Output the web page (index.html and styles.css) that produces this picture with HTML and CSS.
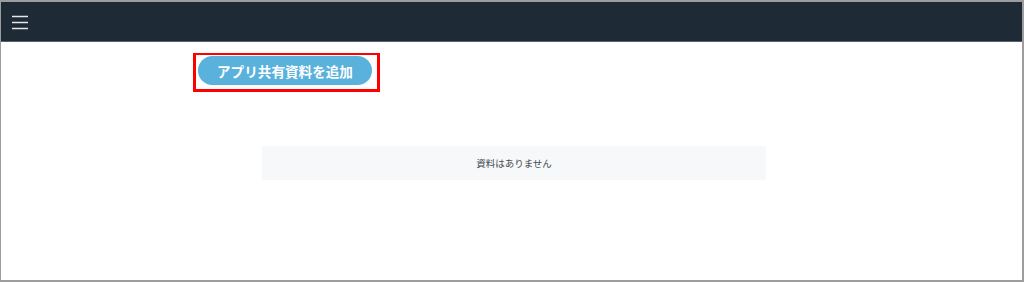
FILE: index.html
```html
<!DOCTYPE html>
<html>
  <head>
    <meta charset="utf-8" />
    <link rel="stylesheet" href="styles.css">
  </head>
  <body>
    <div class="frame">
      <div class="header">
        <svg class="menu-icon" width="16" height="16" viewBox="0 0 16 16">
          <path d="M0 2.5H16M0 8.5H16M0 14.5H16" stroke="#e4e7ea" stroke-width="1.6" />
        </svg>
      </div>

      <div class="content">
        <div class="highlight">
          <button class="add-btn">アプリ共有資料を追加</button>
        </div>

        <div class="empty">資料はありません</div>
      </div>
    </div>
  </body>
</html>
```

FILE: styles.css
```css
:root {
  --frame-border: #9d9d9d;
  --header-bg: #1e2a36;
  --header-line: #56616c;
  --accent: #59b1dc;
  --mark: #ff0000;
  --empty-bg: #f7f8fa;
  --text-muted: #444a50;
}

html,
body {
  margin: 0;
  padding: 0;
  background: #ffffff;
  font-family: "Noto Sans CJK JP", "Noto Sans", sans-serif;
}
.frame {
  box-sizing: border-box;
  width: 1024px;
  height: 282px;
  border: solid var(--frame-border);
  border-width: 2px 2px 2px 1px;
  overflow: hidden;
}
.header {
  height: 39px;
  display: flex;
  align-items: center;
  padding-left: 11px;
  background: var(--header-bg);
  border-bottom: 1px solid var(--header-line);
}
.menu-icon {
  display: block;
}
.content {
  padding-top: 11px;
}
.highlight {
  display: inline-block;
  margin-left: 192px;
  padding: 1px 5px 4px 2px;
  border: 3px solid var(--mark);
  border-top-width: 2px;
}
.add-btn {
  display: block;
  width: 174px;
  height: 29px;
  padding: 0;
  border: none;
  border-radius: 15px;
  background: var(--accent);
  color: #ffffff;
  font-family: "Noto Sans CJK JP", "Noto Sans", sans-serif;
  font-size: 13.6px;
  font-weight: bold;
  letter-spacing: 0;
}
.empty {
  width: 504px;
  height: 34px;
  margin: 54px 0 0 261px;
  display: flex;
  align-items: center;
  justify-content: center;
  background: var(--empty-bg);
  color: var(--text-muted);
  font-size: 9.5px;
}
```
